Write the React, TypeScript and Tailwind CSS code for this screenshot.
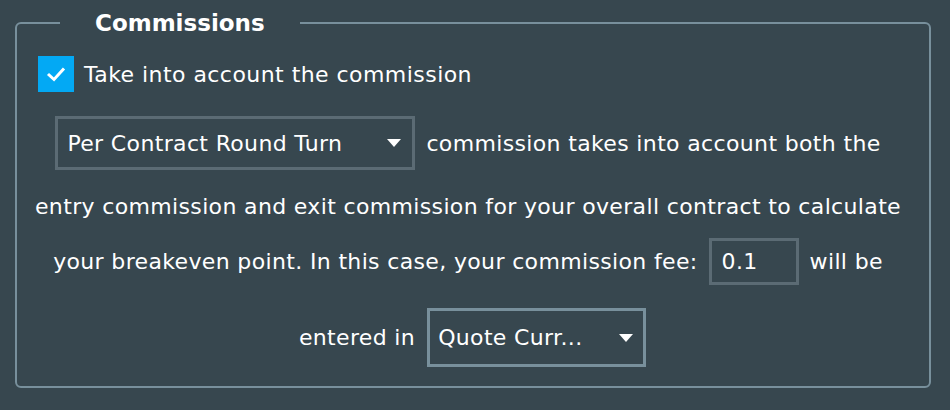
import React from 'react';

function Caret() {
  return (
    <svg width="14" height="8" viewBox="0 0 14 8" className="shrink-0">
      <path d="M0 0 L14 0 L7 8 Z" fill="#ffffff" />
    </svg>
  );
}

export default function App() {
  return (
    <div className="w-[950px] h-[410px] bg-[#37474f] text-white overflow-hidden pt-[9px] pl-[15px]" style={{ fontFamily: '"DejaVu Sans", sans-serif' }}>
      <fieldset className="w-[916px] h-[379px] border-2 border-[#78909c] rounded-[6px] m-0 p-0">
        <legend className="ml-[43px] px-[35px] text-[23px] leading-[28px] font-bold">Commissions</legend>

        <div className="pt-[19px] pl-[21px] flex items-center gap-[10px] h-[36px] box-content text-[22px] tracking-[0.45px]">
          <div className="w-[36px] h-[36px] bg-[#03a9f4] flex items-center justify-center">
            <svg width="20" height="16" viewBox="0 0 20 16">
              <path d="M2 8 L8 13.5 L18 2.5" stroke="#ffffff" strokeWidth="3" fill="none" />
            </svg>
          </div>
          <span>Take into account the commission</span>
        </div>

        <div className="flex flex-col items-center text-[22px] tracking-[0.35px] mt-[24px] pr-[10px]">
          <div className="flex items-center gap-[11px] h-[54px]">
            <div className="w-[360px] h-[54px] border-[3px] border-[#5b6b74] flex items-center justify-between pl-[9px] pr-[11px]">
              <span>Per Contract Round Turn</span>
              <Caret />
            </div>
            <span>commission takes into account both the</span>
          </div>
          <div className="h-[68px] flex items-center pt-[4px]">
            entry commission and exit commission for your overall contract to calculate
          </div>
          <div className="flex items-center gap-[11px] h-[47px]">
            <span>your breakeven point. In this case, your commission fee:</span>
            <div className="w-[90px] h-[47px] border-[3px] border-[#5b6b74] flex items-center pl-[10px]">0.1</div>
            <span>will be</span>
          </div>
          <div className="flex items-center gap-[12px] h-[59px] mt-[23px] ml-[9px]">
            <span>entered in</span>
            <div className="w-[219px] h-[59px] border-[3px] border-[#78909c] flex items-center justify-between pl-[8px] pr-[10px]">
              <span>Quote Curr...</span>
              <Caret />
            </div>
          </div>
        </div>
      </fieldset>
    </div>
  );
}
